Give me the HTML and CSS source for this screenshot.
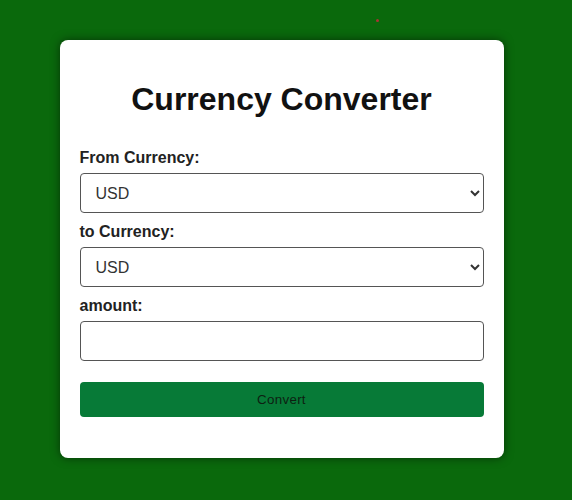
FILE: index.html
```html
<!DOCTYPE html>
<html>
<head>
<meta charset="utf-8">
<link rel="stylesheet" href="styles.css">
</head>
<body>
<span class="dot"></span>
<div class="card">
  <h1 class="title">Currency Converter</h1>
  <form class="form">
    <label class="label" for="from">From Currency:</label>
    <select class="field" id="from"><option>USD</option><option>EUR</option></select>
    <label class="label" for="to">to Currency:</label>
    <select class="field" id="to"><option>USD</option><option>EUR</option></select>
    <label class="label" for="amount">amount:</label>
    <input class="field input" id="amount" type="number">
    <button class="btn" type="button">Convert</button>
  </form>
</div>
</body>
</html>
```
FILE: styles.css
```css
html, body { margin: 0; height: 100%; }
body {
  background: #0a690c;
  font-family: "Liberation Sans", Arial, sans-serif;
  display: flex;
  align-items: center;
  justify-content: center;
  padding-right: 9px;
  padding-bottom: 2px;
  box-sizing: border-box;
}
.dot {
  position: absolute;
  left: 376px;
  top: 19px;
  width: 3px;
  height: 3px;
  border-radius: 50%;
  background: #a33;
}
.card {
  width: 404px;
  padding: 20px;
  background: #fff;
  border-radius: 8px;
  box-shadow: 0 0 10px rgba(0,0,0,0.5);
}
.title {
  font-size: 32px;
  text-align: center;
  margin: 21px 0;
  color: #111;
}
.form { display: flex; flex-direction: column; margin-bottom: 21px; }
.label {
  font-size: 16px;
  font-weight: bold;
  color: #222;
  line-height: 18px;
  margin: 10px 0 6px;
}
.field {
  height: 40px;
  box-sizing: border-box;
  border: 1px solid #555;
  border-radius: 4px;
  background: #fff;
  font-family: "Liberation Sans", Arial, sans-serif;
  font-size: 16px;
  color: #333;
  padding: 0 11px;
}
.input { margin-bottom: 21px; }
.btn {
  height: 35px;
  border: none;
  border-radius: 4px;
  background: #077a37;
  color: #0d1f12;
  font-family: "Liberation Sans", Arial, sans-serif;
  font-size: 13.33px;
  letter-spacing: 0.3px;
}
```
